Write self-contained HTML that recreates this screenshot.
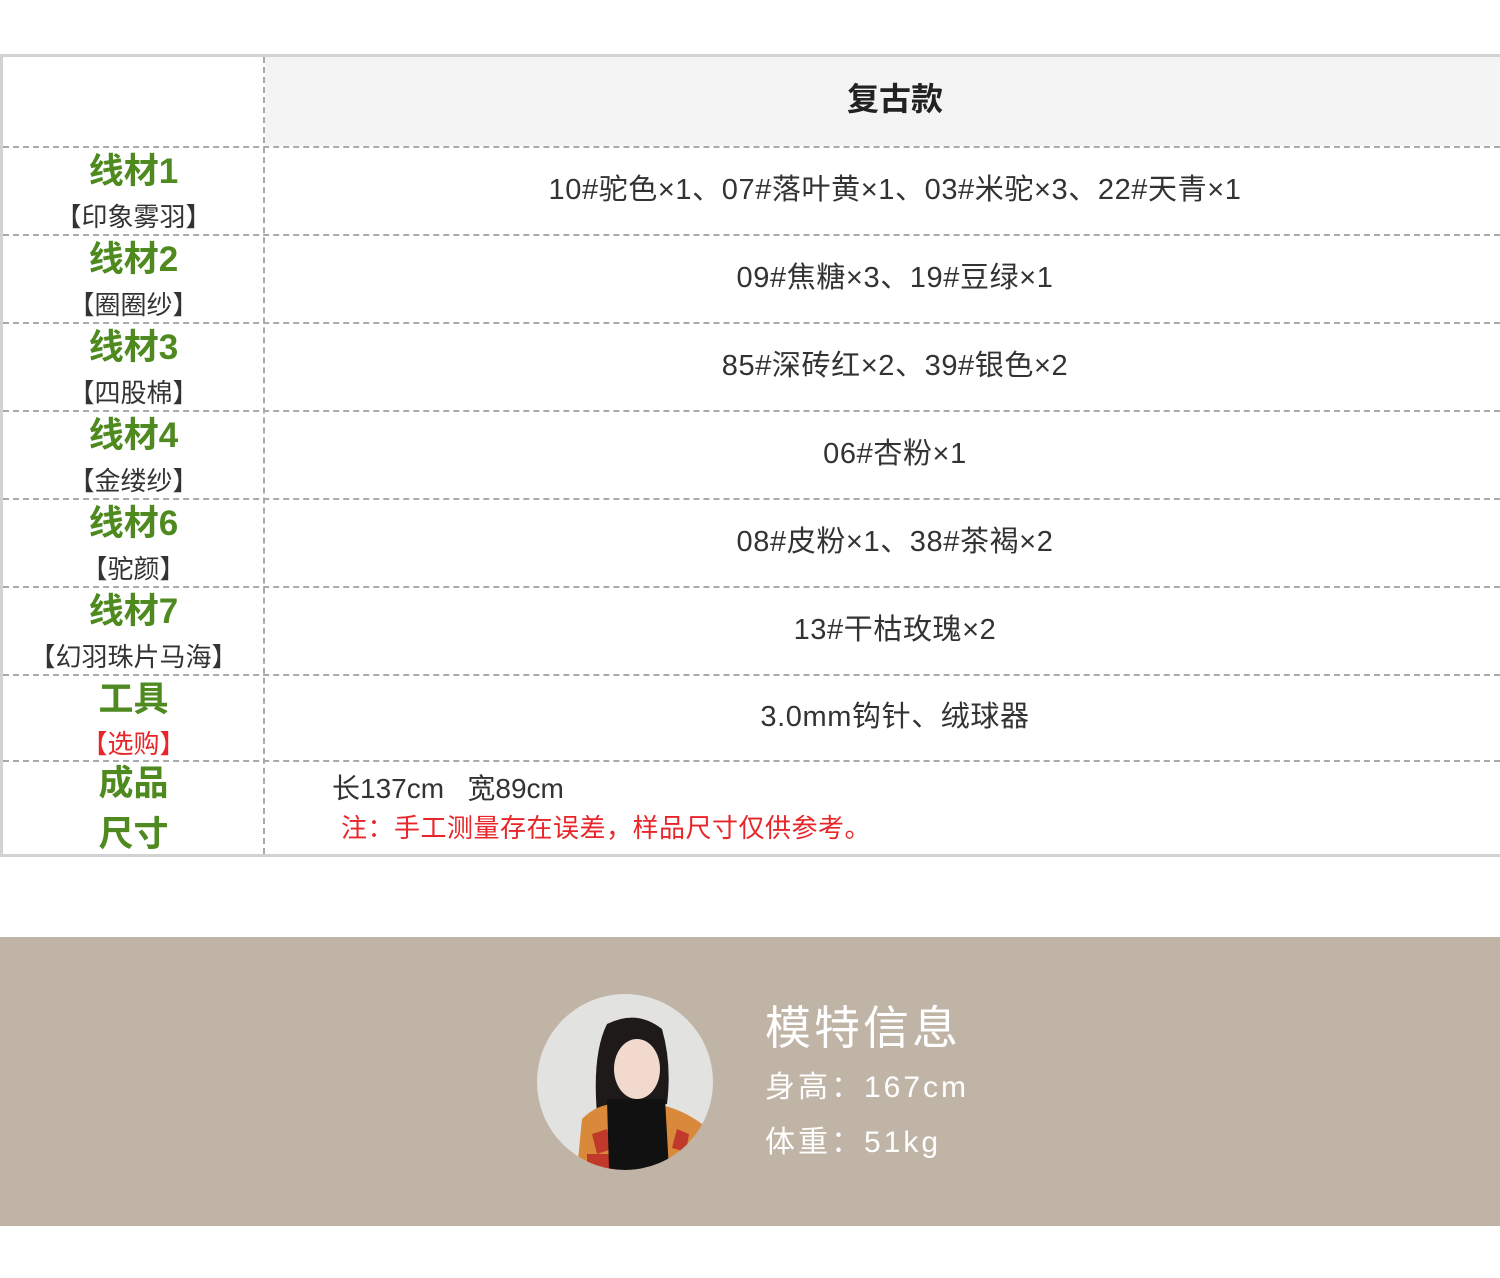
<!DOCTYPE html>
<html><head><meta charset="utf-8"><style>
*{margin:0;padding:0;box-sizing:border-box}
body{width:1500px;height:1278px;background:#fff;position:relative;overflow:hidden;font-family:"Liberation Sans","Noto Sans CJK SC",sans-serif}
.a{position:absolute}
.h{position:absolute;left:3px;right:0;border-top:2px dashed #aaa;height:0}
.g{position:absolute;left:3px;width:261px;text-align:center;color:#4e8a1f;font-weight:bold;font-size:35px;line-height:40px}
.s{position:absolute;left:3px;width:261px;text-align:center;color:#333;font-size:26px;line-height:30px}
.r{position:absolute;left:290px;width:1210px;text-align:center;color:#333;font-size:29px;line-height:34px;letter-spacing:0.6px}
</style></head><body>
<div class="a" style="left:0;top:54px;width:1500px;height:3px;background:#d2d2d2"></div>
<div class="a" style="left:0;top:854px;width:1500px;height:3px;background:#d2d2d2"></div>
<div class="a" style="left:0;top:54px;width:3px;height:803px;background:#d2d2d2"></div>
<div class="a" style="left:265px;top:57px;right:0;height:89px;background:#f4f4f4"></div>
<div class="a" style="left:263px;top:57px;height:797px;border-left:2px dashed #aaa"></div>
<div class="h" style="top:146px"></div>
<div class="h" style="top:234px"></div>
<div class="h" style="top:322px"></div>
<div class="h" style="top:410px"></div>
<div class="h" style="top:498px"></div>
<div class="h" style="top:586px"></div>
<div class="h" style="top:674px"></div>
<div class="h" style="top:760px"></div>
<div class="r" style="top:82px;font-weight:bold;font-size:32px;color:#222;letter-spacing:0">复古款</div>

<div class="g" style="top:152px">线材1</div><div class="s" style="top:202px">【印象雾羽】</div>
<div class="r" style="top:173px">10#驼色×1、07#落叶黄×1、03#米驼×3、22#天青×1</div>
<div class="g" style="top:240px">线材2</div><div class="s" style="top:290px">【圈圈纱】</div>
<div class="r" style="top:261px">09#焦糖×3、19#豆绿×1</div>
<div class="g" style="top:328px">线材3</div><div class="s" style="top:378px">【四股棉】</div>
<div class="r" style="top:349px">85#深砖红×2、39#银色×2</div>
<div class="g" style="top:416px">线材4</div><div class="s" style="top:466px">【金缕纱】</div>
<div class="r" style="top:437px">06#杏粉×1</div>
<div class="g" style="top:504px">线材6</div><div class="s" style="top:554px">【驼颜】</div>
<div class="r" style="top:525px">08#皮粉×1、38#茶褐×2</div>
<div class="g" style="top:592px">线材7</div><div class="s" style="top:642px">【幻羽珠片马海】</div>
<div class="r" style="top:613px">13#干枯玫瑰×2</div>
<div class="g" style="top:680px">工具</div><div class="s" style="top:729px;color:#e8262a">【选购】</div>
<div class="r" style="top:700px">3.0mm钩针、绒球器</div>
<div class="g" style="top:764px">成品</div><div class="g" style="top:815px">尺寸</div>
<div class="a" style="left:332px;top:772px;font-size:28px;color:#333;line-height:34px;white-space:pre">长137cm   宽89cm</div>
<div class="a" style="left:341px;top:812px;font-size:26px;color:#e8262a;line-height:32px;letter-spacing:0.5px">注：手工测量存在误差，样品尺寸仅供参考。</div>

<div class="a" style="left:0;top:937px;width:1500px;height:289px;background:#c0b4a6"></div>
<svg class="a" style="left:537px;top:994px" width="176" height="176" viewBox="0 0 176 176">
<defs><clipPath id="c"><circle cx="88" cy="88" r="88"/></clipPath></defs>
<g clip-path="url(#c)">
<rect width="176" height="176" fill="#e2e2e0"/>
<path d="M70 30 Q100 15 125 35 Q135 70 130 110 L60 120 Q55 60 70 30Z" fill="#1e1a1a"/>
<ellipse cx="100" cy="75" rx="23" ry="30" fill="#f1dacd"/>
<path d="M40 176 L45 125 Q60 110 78 110 L120 110 Q145 115 165 130 L170 176Z" fill="#d9893a"/>
<path d="M55 140 l15 -5 l5 20 l-15 5z M140 135 l12 5 l-3 18 l-14 -4z M50 160 l25 0 l0 16 l-25 0z" fill="#c0392b"/>
<path d="M70 105 L128 105 L132 176 L72 176Z" fill="#111"/>
</g></svg>
<div class="a" style="left:765px;top:1000px;font-size:46px;color:#fff;letter-spacing:3px;line-height:56px">模特信息</div>
<div class="a" style="left:765px;top:1069px;font-size:30px;color:#fff;letter-spacing:3px;line-height:38px">身高：167cm</div>
<div class="a" style="left:765px;top:1124px;font-size:30px;color:#fff;letter-spacing:3px;line-height:38px">体重：51kg</div>
</body></html>
